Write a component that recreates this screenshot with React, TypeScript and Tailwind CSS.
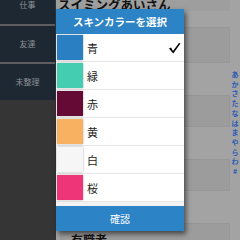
import React from "react";

const swatches = [
  { name: "青", color: "bg-[#2a7fc2]", checked: true },
  { name: "緑", color: "bg-[#45cdb1]" },
  { name: "赤", color: "bg-[#650a35]" },
  { name: "黄", color: "bg-[#f8b161]" },
  { name: "白", color: "bg-[#f6f6f6]" },
  { name: "桜", color: "bg-[#ee3577]" },
];

const index = ["あ", "か", "さ", "た", "な", "は", "ま", "や", "ら", "わ", "#"];

export default function App() {
  return (
    <div
      className="relative w-[240px] h-[240px] overflow-hidden flex bg-[#a3a3a3]"
      style={{ fontFamily: '"Noto Sans CJK JP", "Noto Sans", sans-serif' }}
    >
      {/* sidebar */}
      <div className="w-[56px] h-full flex flex-col bg-[#353535]">
        <div className="bg-[#1e2833] border-r border-[#2c3640]">
          <div className="h-[24px] flex justify-center items-start text-[8px] leading-[10px] text-[#8b9096]">仕事</div>
          <div className="h-[2px] bg-[#5e5e5e]" />
          <div className="h-[36px] flex justify-center items-center text-[8px] leading-[10px] text-[#8b9096]">友達</div>
          <div className="h-[2px] bg-[#5e5e5e]" />
          <div className="h-[36px] flex justify-center items-center text-[8px] leading-[10px] text-[#8b9096]">未整理</div>
        </div>
      </div>

      {/* main */}
      <div className="flex-1 flex flex-col">
        <div className="h-[11px] pl-[2px] bg-[#9e9e9e] flex items-end">
          <div className="text-[12.5px] leading-[12px] font-bold text-[#111] whitespace-nowrap">スイミングあいさん</div>
        </div>
        <div className="flex flex-col gap-[32px] pt-[16px] pl-[4px]">
          <div className="h-[36px] bg-[#9c9c9c] border border-[#979797]" />
          <div className="h-[32px] bg-[#9c9c9c] border border-[#979797]" />
          <div className="h-[32px] bg-[#9c9c9c] border border-[#979797]" />
          <div className="h-[32px] bg-[#9c9c9c] border border-[#979797] pl-[10px] pt-[9px]">
            <div className="text-[12px] leading-[14px] font-bold text-[#111]">有職者</div>
          </div>
        </div>
      </div>

      {/* index column */}
      <div className="w-[10px] flex flex-col items-center pt-[70px]">
        {index.map((c) => (
          <div key={c} className="text-[7px] leading-[9.7px] font-bold text-[#2a5cb5]">{c}</div>
        ))}
      </div>

      {/* dialog */}
      <div className="absolute left-[56px] top-[9px] w-[128px] bg-white shadow-[2px_3px_5px_rgba(0,0,0,0.55)]">
        <div className="h-[25px] bg-[#2c83c5] flex items-center justify-center text-white text-[10.5px] font-bold">
          スキンカラーを選択
        </div>
        {swatches.map((s) => (
          <div key={s.name} className="h-[28px] flex items-center border-b border-[#e6e6e6] relative">
            <div className={`ml-[1px] w-[26px] h-[25px] ${s.color} shadow-[0_0_2px_rgba(0,0,0,0.35)]`} />
            <div className="ml-[4px] text-[11px] leading-[12px] text-[#222]">{s.name}</div>
            {s.checked && (
              <svg className="absolute left-[112px] top-[8px]" width="13" height="12" viewBox="0 0 13 12">
                <path d="M1 6.5 L3 5.5 L5 9 L11 1 L12.5 1.5 L5.2 11.5 Z" fill="#000" />
              </svg>
            )}
          </div>
        ))}
        <div className="h-[4px] bg-[#f2f2f2]" />
        <div className="h-[25px] bg-[#2c83c5] flex items-center justify-center text-white text-[10px]">確認</div>
      </div>
    </div>
  );
}
